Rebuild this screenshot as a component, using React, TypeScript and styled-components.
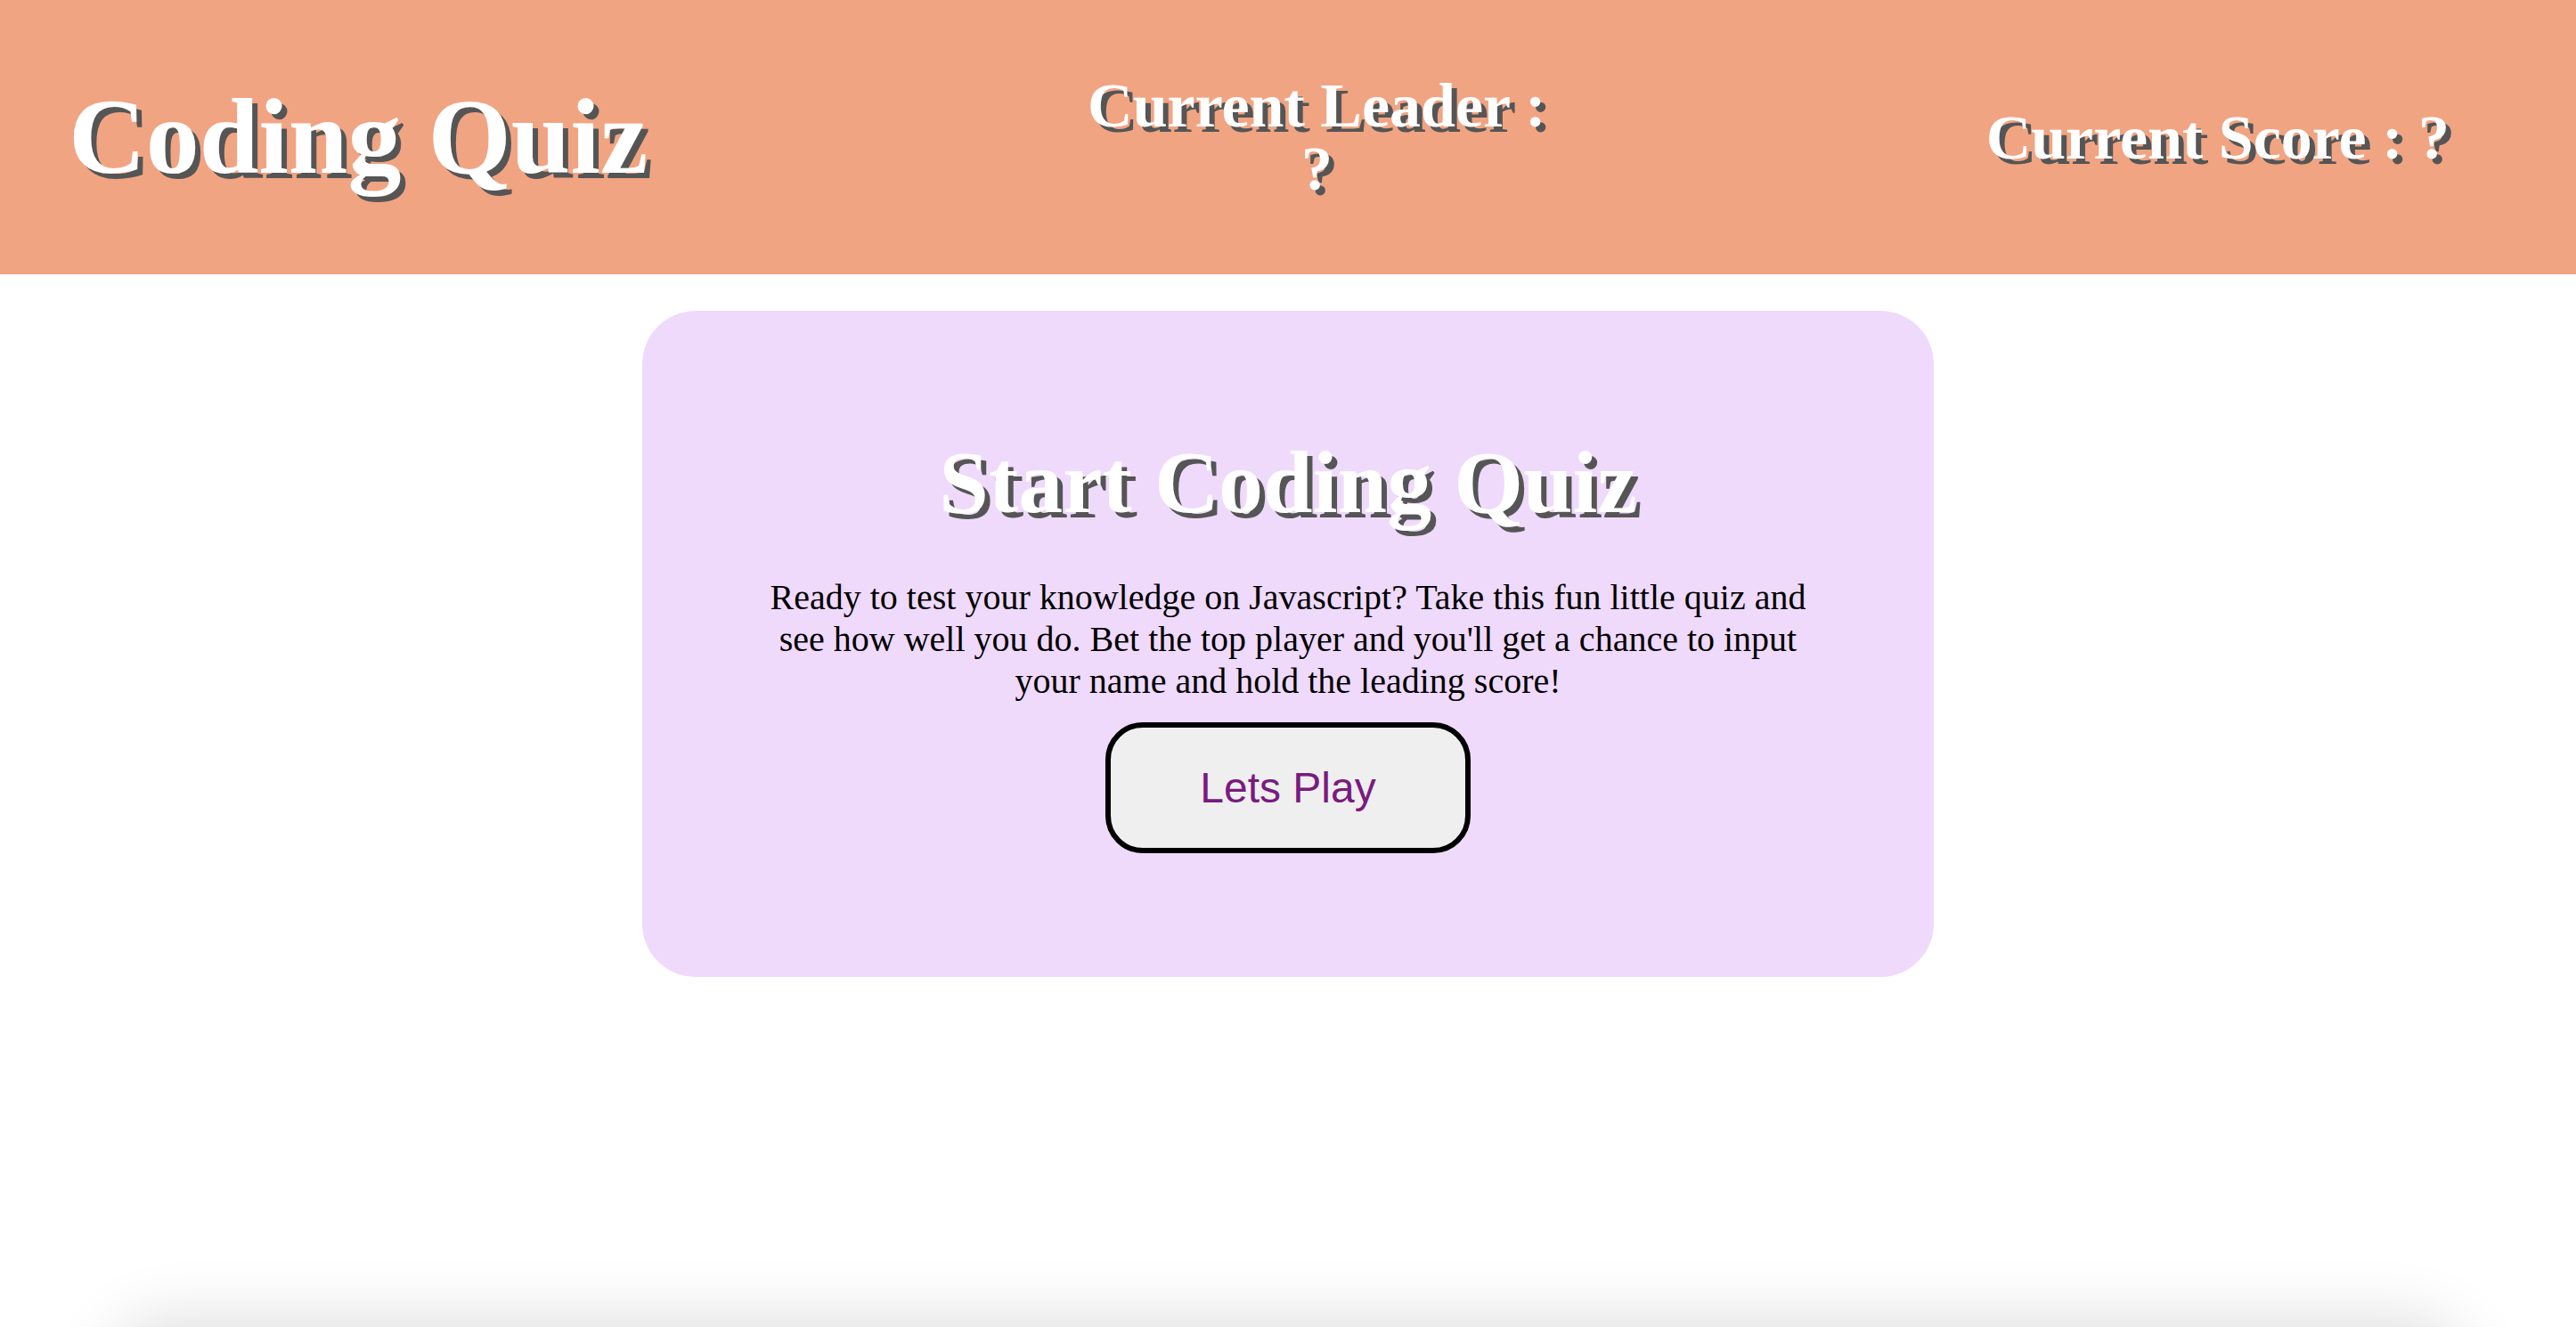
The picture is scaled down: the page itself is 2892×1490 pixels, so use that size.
import React from "react";
import styled, { createGlobalStyle } from "styled-components";

const GlobalStyle = createGlobalStyle`
  html, body {
    margin: 0;
    padding: 0;
    background: #ffffff;
    font-family: "Liberation Serif", "Times New Roman", serif;
  }
  #root {
    min-height: 100vh;
  }
`;

const Page = styled.div`
  min-height: 100vh;
  display: flex;
  flex-direction: column;
`;

const Header = styled.header`
  height: 308px;
  background: #f1a482;
  display: flex;
  align-items: center;
  justify-content: space-between;
  padding: 0 142px 0 77px;
  box-sizing: border-box;
`;

const shadow = "6px 6px 0 #555555";

const Logo = styled.h1`
  margin: 0;
  font-family: "Liberation Serif", "Times New Roman", serif;
  font-weight: 700;
  font-size: 120px;
  line-height: normal;
  color: #ffffff;
  text-shadow: ${shadow};
  white-space: nowrap;
`;

const Stat = styled.h2<{ $wrap?: boolean }>`
  margin: 0;
  font-family: "Liberation Serif", "Times New Roman", serif;
  font-weight: 700;
  font-size: 70px;
  line-height: 71px;
  color: #ffffff;
  text-shadow: ${shadow};
  text-align: center;
  max-width: ${(p) => (p.$wrap ? "540px" : "none")};
  white-space: ${(p) => (p.$wrap ? "normal" : "nowrap")};
`;

const Main = styled.main`
  display: flex;
  justify-content: center;
  padding-top: 41px;
`;

const Card = styled.section`
  width: calc(50% + 4px);
  box-sizing: border-box;
  background: #efdafc;
  border-radius: 60px;
  padding: 135px 40px 139px;
  display: flex;
  flex-direction: column;
  align-items: center;
  text-align: center;
`;

const Title = styled.h2`
  margin: 0 0 48px;
  font-family: "Liberation Serif", "Times New Roman", serif;
  font-weight: 700;
  font-size: 100px;
  line-height: normal;
  color: #ffffff;
  text-shadow: ${shadow};
`;

const Intro = styled.p`
  margin: 0 0 23px;
  max-width: 1200px;
  font-family: "Liberation Serif", "Times New Roman", serif;
  font-size: 40px;
  line-height: normal;
  color: #000000;
`;

const PlayButton = styled.button`
  font-family: "Liberation Sans", Arial, sans-serif;
  font-size: 48px;
  line-height: normal;
  color: #7a1a80;
  background: #efefef;
  border: 6px solid #000000;
  border-radius: 42px;
  padding: 40px 100px;
  cursor: pointer;
`;

const BottomShade = styled.div`
  position: fixed;
  left: 130px;
  right: 130px;
  bottom: -120px;
  height: 120px;
  border-radius: 60px;
  background: #d8d8d8;
  box-shadow: 0 0 70px 10px rgba(0, 0, 0, 0.13);
  pointer-events: none;
`;

export default function App() {
  return (
    <Page>
      <GlobalStyle />
      <Header>
        <Logo>Coding Quiz</Logo>
        <Stat $wrap>Current Leader : ?</Stat>
        <Stat>Current Score : ?</Stat>
      </Header>
      <Main>
        <Card>
          <Title>Start Coding Quiz</Title>
          <Intro>
            Ready to test your knowledge on Javascript? Take this fun little quiz
            and see how well you do. Bet the top player and you'll get a chance to
            input your name and hold the leading score!
          </Intro>
          <PlayButton type="button">Lets Play</PlayButton>
        </Card>
      </Main>
      <BottomShade />
    </Page>
  );
}
